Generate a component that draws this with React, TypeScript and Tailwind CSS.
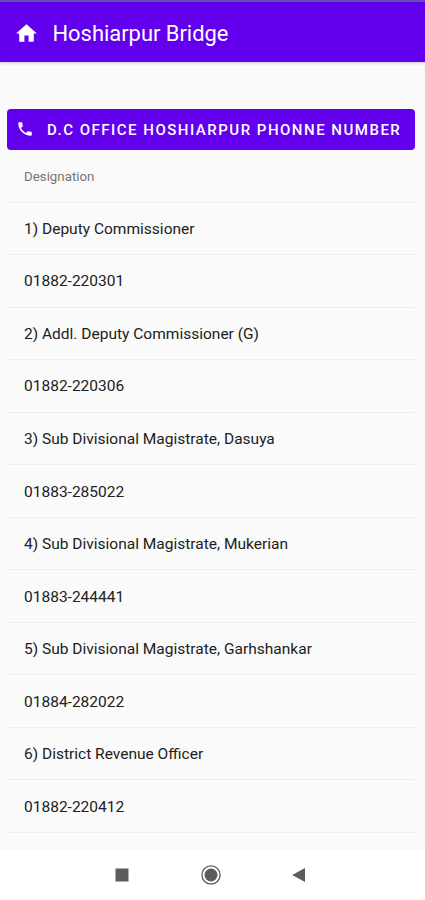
import React from "react";

const rows: string[] = [
  "1) Deputy Commissioner",
  "01882-220301",
  "2) Addl. Deputy Commissioner (G)",
  "01882-220306",
  "3) Sub Divisional Magistrate, Dasuya",
  "01883-285022",
  "4) Sub Divisional Magistrate, Mukerian",
  "01883-244441",
  "5) Sub Divisional Magistrate, Garhshankar",
  "01884-282022",
  "6) District Revenue Officer",
  "01882-220412",
];

export default function App() {
  return (
    <div className="flex h-[900px] w-[425px] flex-col overflow-hidden bg-[#fafafa] font-['Roboto',sans-serif] text-[#212121]">
      <header className="flex h-[62px] shrink-0 items-center border-t-2 border-[#6a4aae] bg-[#6200ee] pt-[3px] pl-[14px] text-white shadow-[0_1px_3px_rgba(0,0,0,0.2)]">
        <svg viewBox="0 0 24 24" className="size-[25px]" fill="currentColor">
          <path d="M10 20v-6h4v6h5v-8h3L12 3 2 12h3v8z" />
        </svg>
        <h1 className="ml-[13.5px] text-[21.9px] leading-7 whitespace-nowrap">Hoshiarpur Bridge</h1>
      </header>
      <main className="flex min-h-0 flex-1 flex-col overflow-hidden pr-[10px] pl-[6.5px] pt-[47px]">
        <button className="flex h-[41px] shrink-0 items-center rounded-[4px] bg-[#6200ee] pl-[9.5px] text-white">
          <svg viewBox="0 0 24 24" className="mb-[2px] size-[18px]" fill="currentColor">
            <path d="M6.62 10.79c1.44 2.83 3.76 5.14 6.59 6.59l2.2-2.2c.27-.27.67-.36 1.02-.24 1.12.37 2.33.57 3.57.57.55 0 1 .45 1 1V20c0 .55-.45 1-1 1-9.39 0-17-7.61-17-17 0-.55.45-1 1-1h3.5c.55 0 1 .45 1 1 0 1.25.2 2.45.57 3.57.11.35.03.74-.25 1.02z" />
          </svg>
          <span className="ml-[13px] pt-[2px] text-[15px] font-medium tracking-[1.5px] whitespace-nowrap">D.C OFFICE HOSHIARPUR PHONNE NUMBER</span>
        </button>
        <div className="flex h-[52.5px] shrink-0 items-center border-b border-[#eeeeee] pt-[2px] pl-[17.5px] text-[13.3px] text-[#757575]">Designation</div>
        {rows.map((row) => (
          <div key={row} className="flex h-[52.54px] shrink-0 items-center border-b border-[#eeeeee] pt-[2.5px] pl-[17.5px] text-[15.53px] whitespace-nowrap">
            {row}
          </div>
        ))}
      </main>
      <nav className="grid h-[50px] shrink-0 grid-cols-[77px_89px_89px_87px_83px] items-center bg-white text-[#5c5c5c]">
        <span />
        <svg viewBox="0 0 24 24" className="size-6 justify-self-center" fill="currentColor"><rect x="5.5" y="5.5" width="13" height="13" /></svg>
        <svg viewBox="0 0 24 24" className="size-6 justify-self-center" fill="currentColor"><circle cx="12" cy="12" r="9.1" fill="none" stroke="currentColor" strokeWidth="1.3" /><circle cx="12" cy="12" r="6.5" /></svg>
        <svg viewBox="0 0 24 24" className="size-6 justify-self-center" fill="currentColor"><path d="M5.2 12 18 5v14z" /></svg>
      </nav>
    </div>
  );
}
